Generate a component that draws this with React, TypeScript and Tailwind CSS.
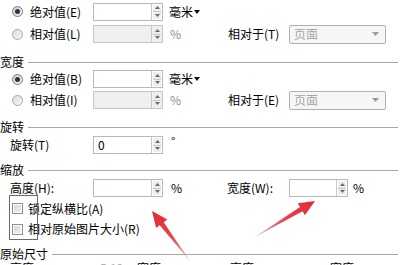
import React from "react";

const Radio = ({ on }: { on?: boolean }) => (
  <span
    className={
      "flex h-[11px] w-[11px] items-center justify-center rounded-full border " +
      (on
        ? "border-[#7a7a7a] bg-gradient-to-br from-[#cfcfcf] to-[#f4f4f4]"
        : "border-[#a8a8a8] bg-gradient-to-br from-[#dcdcdc] to-[#f8f8f8]")
    }
  >
    {on && <span className="h-[5px] w-[5px] rounded-full bg-[#333]" />}
  </span>
);

const Check = () => (
  <span className="flex h-[11px] w-[11px] items-center justify-center border border-[#8e8f8f] bg-white">
    <span className="h-[7px] w-[7px] bg-gradient-to-br from-[#d6d6d6] to-[#f2f2f2]" />
  </span>
);

const Spin = () => (
  <div className="flex h-full w-[11px] flex-col border-l border-[#c8c8c8] p-[1px]">
    <div className="flex flex-1 items-center justify-center border-b border-[#c8c8c8] bg-[#eeeeee]">
      <svg width="5" height="3" viewBox="0 0 5 3">
        <path d="M0 3L2.5 0L5 3Z" fill="#6a6a6a" />
      </svg>
    </div>
    <div className="flex flex-1 items-center justify-center bg-[#eeeeee]">
      <svg width="5" height="3" viewBox="0 0 5 3">
        <path d="M0 0L2.5 3L5 0Z" fill="#6a6a6a" />
      </svg>
    </div>
  </div>
);

const Input = ({
  disabled,
  value,
  w = "w-[70px]",
}: {
  disabled?: boolean;
  value?: string;
  w?: string;
}) => (
  <div
    className={
      "flex h-[18px] border " +
      w +
      (disabled ? " border-[#c4c4c4] bg-[#f0f0f0]" : " border-[#b8b8b8] bg-white")
    }
  >
    <div className="flex flex-1 items-center pl-[4px] text-[12px] leading-none text-black">
      {value}
    </div>
    <Spin />
  </div>
);

const Select = () => (
  <div className="flex h-[19px] w-[97px] items-center justify-between rounded-[2px] border border-[#b0b0b0] bg-[#f6f6f6] pl-[4px] pr-[6px]">
    <span className="text-[12px] leading-none text-[#a6a6a6]">页面</span>
    <svg width="7" height="4" viewBox="0 0 7 4">
      <path d="M0 0L3.5 4L7 0Z" fill="#9a9a9a" />
    </svg>
  </div>
);

const Mm = () => (
  <span className="ml-[6px] flex items-center text-black">
    毫米
    <svg width="6" height="4" viewBox="0 0 6 4" className="ml-[1px]">
      <path d="M0 0L3 4L6 0Z" fill="#111" />
    </svg>
  </span>
);

const Header = ({ title, mt }: { title: string; mt: string }) => (
  <div className={"flex h-[14px] items-center pr-[7px] " + mt}>
    <span className="leading-none text-black">{title}</span>
    <div className="ml-[4px] h-px flex-1 bg-[#a8a8a8]" />
  </div>
);

export default function App() {
  return (
    <div className="relative h-[265px] w-[405px] overflow-hidden bg-white font-['Noto_Sans_CJK_SC',sans-serif] text-[12px] leading-none text-black">
      <div className="flex h-[23px] items-center">
        <div className="flex w-[228px] items-center">
          <div className="ml-[12px]">
            <Radio on />
          </div>
          <span className="ml-[7px] w-[63px]">绝对值(E)</span>
          <Input />
          <Mm />
        </div>
      </div>
      <div className="flex h-[22px] items-center">
        <div className="flex w-[228px] items-center">
          <div className="ml-[12px]">
            <Radio />
          </div>
          <span className="ml-[7px] w-[63px]">相对值(L)</span>
          <Input disabled />
          <span className="ml-[7px] text-[#8a8a8a]">%</span>
        </div>
        <span className="w-[61px]">相对于(T)</span>
        <Select />
      </div>

      <Header title="宽度" mt="mt-[10px]" />

      <div className="flex h-[20px] items-center">
        <div className="flex w-[228px] items-center">
          <div className="ml-[12px]">
            <Radio on />
          </div>
          <span className="ml-[7px] w-[63px]">绝对值(B)</span>
          <Input />
          <Mm />
        </div>
      </div>
      <div className="flex h-[22px] items-center">
        <div className="flex w-[228px] items-center">
          <div className="ml-[12px]">
            <Radio />
          </div>
          <span className="ml-[7px] w-[63px]">相对值(I)</span>
          <Input disabled />
          <span className="ml-[7px] text-[#8a8a8a]">%</span>
        </div>
        <span className="w-[61px]">相对于(E)</span>
        <Select />
      </div>

      <Header title="旋转" mt="mt-[9px]" />

      <div className="flex h-[22px] items-center">
        <span className="ml-[10px] w-[83px]">旋转(T)</span>
        <Input value="0" />
        <span className="mb-[8px] ml-[8px]">°</span>
      </div>

      <Header title="缩放" mt="mt-[7px]" />

      <div className="flex h-[22px] items-center">
        <div className="flex w-[227px] items-center">
          <span className="ml-[10px] w-[83px]">高度(H):</span>
          <Input />
          <span className="ml-[8px]">%</span>
        </div>
        <span className="w-[62px]">宽度(W):</span>
        <Input w="w-[59px]" />
        <span className="ml-[5px]">%</span>
      </div>

      <div className="flex h-[19px] items-center">
        <div className="ml-[12px]">
          <Check />
        </div>
        <span className="ml-[5px]">锁定纵横比(A)</span>
      </div>
      <div className="flex h-[22px] items-center">
        <div className="ml-[12px]">
          <Check />
        </div>
        <span className="ml-[5px]">相对原始图片大小(R)</span>
      </div>

      <Header title="原始尺寸" mt="mt-[7px]" />

      <div className="mt-[1px] flex h-[20px] items-start leading-[12px]">
        <span className="ml-[10px] w-[90px]">高度:</span>
        <span className="w-[37px] text-[#b0b0b0]">5.12</span>
        <span className="w-[93px]">宽度:</span>
        <span className="w-[100px]">高度:</span>
        <span>宽度:</span>
      </div>

      <div className="pointer-events-none absolute left-[9px] top-[195px] h-[45px] w-[29px] border border-[#6a6a6a]" />

      <svg
        className="pointer-events-none absolute left-0 top-0"
        width="405"
        height="265"
        viewBox="0 0 405 265"
      >
        <defs>
          <linearGradient id="g1" x1="190" y1="261" x2="152" y2="211" gradientUnits="userSpaceOnUse">
            <stop offset="0" stopColor="#f3a6ad" />
            <stop offset="0.5" stopColor="#e6434d" />
            <stop offset="1" stopColor="#e02a33" />
          </linearGradient>
          <linearGradient id="g2" x1="255" y1="237" x2="315" y2="201" gradientUnits="userSpaceOnUse">
            <stop offset="0" stopColor="#f3a6ad" />
            <stop offset="0.5" stopColor="#e6434d" />
            <stop offset="1" stopColor="#e02a33" />
          </linearGradient>
        </defs>
        <polygon
          points="190,261 159.7,225.2 156.1,227.9 152,211 167.3,219.5 163.7,222.2"
          fill="url(#g1)"
        />
        <polygon
          points="255,237 300,207.1 297.7,203.2 315,201 304.9,215.2 302.6,211.3"
          fill="url(#g2)"
        />
      </svg>
    </div>
  );
}
